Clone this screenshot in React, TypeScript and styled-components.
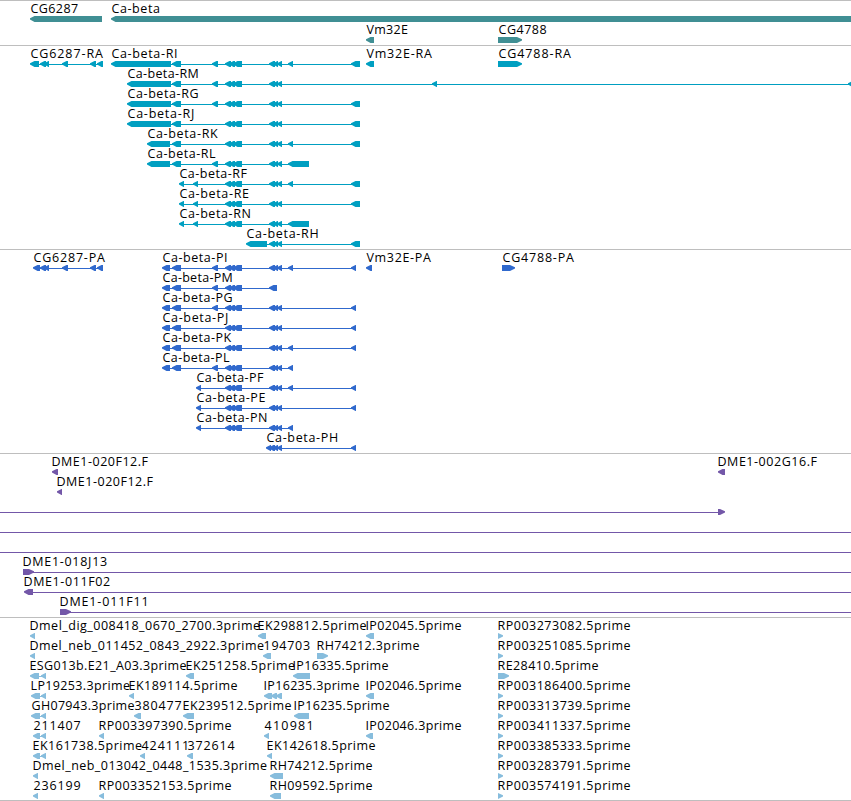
import React from "react";
import styled, { createGlobalStyle } from "styled-components";

const FONT = '12.5px "Open Sans", "Noto Sans", sans-serif';
const VIEW_WIDTH = 851;

type Block = [number, number];

interface Feature {
  name?: string;
  x?: number;
  end?: number;
  blocks?: Block[];
  forward?: boolean;
  line?: Block;
}

interface TrackData {
  id: string;
  color: string;
  height: number;
  rowHeight: number;
  rows: Feature[][];
}

const GlobalStyle = createGlobalStyle`
  html, body {
    margin: 0;
    background: #fff;
    overflow: hidden;
  }
`;

const Browser = styled.main`
  width: ${VIEW_WIDTH}px;
  height: 801px;
  overflow: hidden;
  background: #fff;
`;

const TrackPanel = styled.section<{ $height: number }>`
  box-sizing: border-box;
  height: ${(p) => p.$height}px;
  border-top: 1px solid #bebebe;
  overflow: hidden;
`;

const TrackRow = styled.div<{ $height: number }>`
  display: grid;
  grid-template-rows: 15px 6px;
  height: ${(p) => p.$height}px;
`;

const LabelLine = styled.div`
  display: grid;
  grid-template-columns: ${VIEW_WIDTH}px;
`;

const Label = styled.span<{ $x: number; $spacing: number }>`
  grid-area: 1 / 1;
  justify-self: start;
  margin-left: ${(p) => p.$x}px;
  letter-spacing: ${(p) => p.$spacing}px;
  font: ${FONT};
  line-height: 15px;
  color: #000;
  white-space: nowrap;
`;

const Glyphs = styled.svg`
  display: block;
`;

// exon groups shared by the Ca-beta transcripts
const A: Block[] = [[225, 231], [229, 235], [233, 242]];
const B: Block[] = [[269, 275], [273, 278], [277, 282]];
const CG6287: Block[] = [[40, 46], [44, 49], [62, 68], [90, 96], [97, 103]];

const rna = (suffix: string, x: number, end: number, blocks: Block[]): Feature => ({
  name: "Ca-beta-" + suffix,
  x,
  end,
  blocks,
});

const est = (name: string, x: number, end: number, ...blocks: Block[]): Feature => ({ name, x, end, blocks });

const rp = (name: string, end = 630.5, stop = 503): Feature => ({
  name,
  x: 498,
  end,
  blocks: [[498, stop]],
  forward: true,
});

const tracks: TrackData[] = [
  {
    id: "gene",
    color: "#408f94",
    height: 45,
    rowHeight: 21,
    rows: [
      [est("CG6287", 30, 78, [30, 102]), est("Ca-beta", 111, 159, [111, 870])],
      [
        est("Vm32E", 366, 408, [366, 374]),
        { name: "CG4788", x: 498, end: 546.5, blocks: [[498, 522]], forward: true },
      ],
    ],
  },
  {
    id: "transcript",
    color: "#009fc1",
    height: 204,
    rowHeight: 20,
    rows: [
      [
        est("CG6287-RA", 30, 103, [30, 39], ...CG6287),
        rna("RI", 111, 177, [[111, 171], [172, 181], [212, 218], ...A, ...B, [288, 293], [351, 360]]),
        est("Vm32E-RA", 366, 432, [366, 374]),
        { name: "CG4788-RA", x: 498, end: 571, blocks: [[498, 522]], forward: true },
      ],
      [rna("RM", 127, 198.5, [[127, 171], [172, 181], [212, 218], ...A, ...B, [432, 437], [848, 860]])],
      [rna("RG", 127, 198.5, [[127, 171], [172, 181], [212, 218], ...A, ...B, [351, 360]])],
      [rna("RJ", 127, 194, [[127, 171], [172, 181], ...A, ...B, [351, 360]])],
      [rna("RK", 147, 218, [[147, 170], [172, 181], ...A, ...B, [288, 293], [351, 360]])],
      [rna("RL", 147, 216, [[147, 170], [172, 181], [212, 218], ...A, ...B, [288, 309]])],
      [rna("RF", 179, 247.5, [[179, 184], [193, 198], ...A, ...B, [288, 293], [351, 360]])],
      [rna("RE", 179, 249, [[179, 184], [193, 198], ...A, ...B, [351, 360]])],
      [rna("RN", 179, 250.5, [[179, 184], [193, 198], ...A, ...B, [288, 309]])],
      [rna("RH", 246, 317.5, [[246, 267], ...B, [351, 360]])],
    ],
  },
  {
    id: "protein",
    color: "#3069cd",
    height: 204,
    rowHeight: 20,
    rows: [
      [
        est("CG6287-PA", 33, 105, [33, 40], ...CG6287),
        rna("PI", 162, 227, [[162, 170], [172, 181], [212, 218], ...A, ...B, [288, 293], [351, 356]]),
        est("Vm32E-PA", 366, 431, [366, 372]),
        { name: "CG4788-PA", x: 502, end: 574, blocks: [[502, 515]], forward: true },
      ],
      [rna("PM", 162, 232.5, [[162, 170], [172, 181], [212, 218], ...A, [269, 277]])],
      [rna("PG", 162, 232.5, [[162, 170], [172, 181], [212, 218], ...A, ...B, [351, 356]])],
      [rna("PJ", 162, 228, [[162, 170], [172, 181], ...A, ...B, [351, 356]])],
      [rna("PK", 162, 231.5, [[162, 170], [172, 181], ...A, ...B, [288, 293], [351, 356]])],
      [rna("PL", 162, 230, [[162, 170], [172, 181], [212, 218], ...A, ...B, [288, 293]])],
      [rna("PF", 196, 264, [[196, 201], ...A, ...B, [288, 293], [351, 356]])],
      [rna("PE", 196, 265.5, [[196, 201], ...A, ...B, [351, 356]])],
      [rna("PN", 196, 267, [[196, 201], ...A, ...B, [288, 293]])],
      [rna("PH", 266, 337, [[266, 271], ...B, [351, 356]])],
    ],
  },
  {
    id: "clone",
    color: "#7357a8",
    height: 164,
    rowHeight: 20,
    rows: [
      [est("DME1-020F12.F", 52, 148.5, [52, 58]), est("DME1-002G16.F", 718, 817.5, [718, 725])],
      [est("DME1-020F12.F", 57, 153.5, [57, 62])],
      [{ blocks: [[718, 725]], forward: true, line: [0, 719] }],
      [{ line: [0, VIEW_WIDTH] }],
      [{ line: [0, VIEW_WIDTH] }],
      [{ name: "DME1-018J13", x: 23, end: 107, blocks: [[23, 34]], forward: true, line: [30, VIEW_WIDTH] }],
      [{ name: "DME1-011F02", x: 24, end: 110, blocks: [[24, 33]], line: [30, VIEW_WIDTH] }],
      [{ name: "DME1-011F11", x: 60, end: 146.5, blocks: [[60, 71]], forward: true, line: [66, VIEW_WIDTH] }],
    ],
  },
  {
    id: "est",
    color: "#87bddd",
    height: 183,
    rowHeight: 20,
    rows: [
      [
        est("Dmel_dig_008418_0670_2700.3prime", 30, 260, [30, 35]),
        est("EK298812.5prime", 258, 366.5, [258, 266]),
        est("IP02045.5prime", 366, 461.5, [366, 374]),
        rp("RP003273082.5prime"),
      ],
      [
        est("Dmel_neb_011452_0843_2922.3prime", 30, 264, [30, 35]),
        est("194703", 264, 310, [263, 271]),
        { name: "RH74212.3prime", x: 317, end: 419.5, blocks: [[317, 328]], forward: true },
        rp("RP003251085.5prime"),
      ],
      [
        est("ESG013b.E21_A03.3prime", 30, 186.5, [30, 39], [41, 46]),
        est("EK251258.5prime", 186, 295, [186, 194]),
        est("IP16335.5prime", 293, 388.5, [293, 310]),
        rp("RE28410.5prime", 598.5, 509),
      ],
      [
        est("LP19253.3prime", 31, 130, [31, 40], [41, 46]),
        est("EK189114.5prime", 129, 237.5, [129, 134]),
        est("IP16235.3prime", 264, 359.5, [264, 272], [271, 277], [276, 282]),
        est("IP02046.5prime", 366, 461.5, [366, 374]),
        rp("RP003186400.5prime"),
      ],
      [
        est("GH07943.3prime", 31, 134.5, [31, 40], [41, 46]),
        est("380477", 134, 181.5, [134, 141]),
        est("EK239512.5prime", 183, 291.5, [183, 194]),
        est("IP16235.5prime", 294, 389.5, [294, 309]),
        rp("RP003313739.5prime"),
      ],
      [
        est("211407", 33, 80.5, [33, 40], [41, 46]),
        est("RP003397390.5prime", 99, 231.5, [99, 104]),
        est("410981", 264, 311.5, [264, 269]),
        est("IP02046.3prime", 366, 461.5, [366, 373]),
        rp("RP003411337.5prime"),
      ],
      [
        est("EK161738.5prime", 33, 142, [33, 40], [41, 46]),
        est("424111", 141, 187, [140, 145]),
        est("372614", 187, 234.5, [187, 193]),
        est("EK142618.5prime", 267, 375.5, [267, 272]),
        rp("RP003385333.5prime"),
      ],
      [
        est("Dmel_neb_013042_0448_1535.3prime", 33, 267, [33, 38]),
        est("RH74212.5prime", 270, 372.5, [270, 283]),
        rp("RP003283791.5prime"),
      ],
      [
        est("236199", 33, 80.5, [33, 38]),
        est("RP003352153.5prime", 99, 231.5, [99, 104]),
        est("RH09592.5prime", 270, 372.5, [270, 281]),
        rp("RP003574191.5prime"),
      ],
    ],
  },
];

const ctx = document.createElement("canvas").getContext("2d")!;

// spreads the letters so that the name fills the pixels from x to end
const fitLabel = (name: string, x: number, end: number) => {
  ctx.font = FONT;
  const m = ctx.measureText(name);
  const ink = m.actualBoundingBoxLeft + m.actualBoundingBoxRight;
  return {
    x: x + 0.5 + m.actualBoundingBoxLeft,
    spacing: (end - x - 0.5 - ink) / (name.length - 1),
  };
};

const blockPoints = ([x0, x1]: Block, forward?: boolean) => {
  const head = Math.min(5, x1 - x0);
  return forward
    ? `${x0},0 ${x1 - head},0 ${x1},2.3 ${x1},3.5 ${x1 - head},6 ${x0},6`
    : `${x1},0 ${x0 + head - 0.5},0 ${x0},2.2 ${x0},3.5 ${x0 + head - 0.5},6 ${x1},6`;
};

const FeatureGlyph: React.FC<{ feature: Feature }> = ({ feature }) => {
  const blocks = feature.blocks ?? [];
  const line = feature.line ?? (blocks.length > 1 ? [blocks[0][0] + 4, blocks[blocks.length - 1][1] - 2] : null);

  return (
    <g>
      {line && <rect x={line[0]} y={3} width={line[1] - line[0]} height={1} />}
      {blocks.map((block) => (
        <polygon key={block[0]} points={blockPoints(block, feature.forward)} />
      ))}
    </g>
  );
};

const FeatureLabel: React.FC<{ feature: Feature }> = ({ feature }) => {
  const { name, x = 0, end = 0 } = feature;
  if (!name) {
    return null;
  }

  const fit = fitLabel(name, x, end);
  return (
    <Label $x={fit.x} $spacing={fit.spacing}>
      {name}
    </Label>
  );
};

const Track: React.FC<{ track: TrackData }> = ({ track }) => (
  <TrackPanel $height={track.height}>
    {track.rows.map((features, i) => (
      <TrackRow key={i} $height={track.rowHeight}>
        <LabelLine>
          {features.map((feature, j) => (
            <FeatureLabel key={j} feature={feature} />
          ))}
        </LabelLine>
        <Glyphs width={VIEW_WIDTH} height={6} fill={track.color}>
          {features.map((feature, j) => (
            <FeatureGlyph key={j} feature={feature} />
          ))}
        </Glyphs>
      </TrackRow>
    ))}
  </TrackPanel>
);

const App: React.FC = () => (
  <>
    <GlobalStyle />
    <Browser>
      {tracks.map((track) => (
        <Track key={track.id} track={track} />
      ))}
      <TrackPanel $height={1} />
    </Browser>
  </>
);

export default App;
